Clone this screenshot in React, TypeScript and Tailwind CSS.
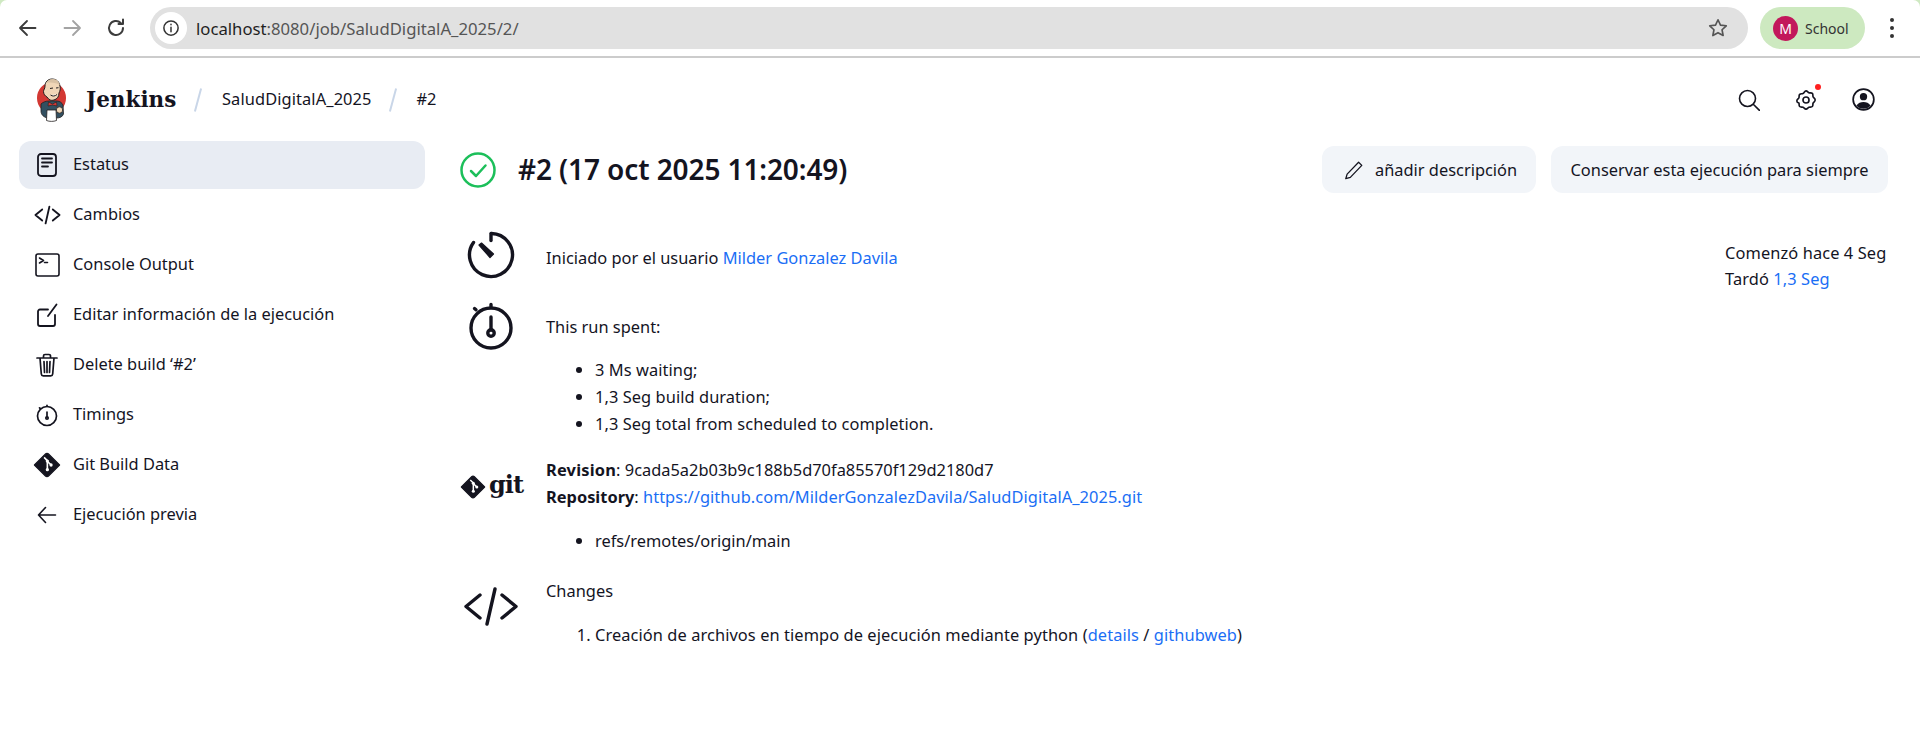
import React from "react";

const ink = "#14141f";

function S({ size = 24, w, h, vb = "0 0 24 24", children, className = "", sw = 2 }: { size?: number; w?: number; h?: number; vb?: string; children: React.ReactNode; className?: string; sw?: number }) {
  return (
    <svg width={w ?? size} height={h ?? size} viewBox={vb} fill="none" stroke="currentColor" strokeWidth={sw} strokeLinecap="round" strokeLinejoin="round" className={className}>
      {children}
    </svg>
  );
}

function JenkinsLogo() {
  return (
    <svg width="33" height="44" viewBox="0 0 33 44" className="shrink-0">
      <ellipse cx="16.500" cy="20" rx="14.500" ry="15.500" fill="#d33833" />
      <path d="M6 26c2-2 5-3 8-3h8c3 0 5 2 6 4l.5 9c-1 3-4 4-7 4H12c-3-1-6-3-6-7z" fill="#335061" stroke="#231f20" strokeWidth="0.8" />
      <path d="M10 8c0-4 3-7 7-7s7 2 8 7c.7 3 0 5-1 7 0 4-2 6-5 7-3 1-5 0-7-3-2-1-3.500-3-3.500-5.500 0-2 1.500-2.500 1.500-5.500z" fill="#f0d6b7" stroke="#231f20" strokeWidth="1" />
      <path d="M11 5c2-3 4-4 7-4 4 0 6 3 7 6-3-2-9-3-14-2z" fill="#d9c2a5" />
      <path d="M15 10.500l3-.5M21 10l2.500-.3" stroke="#231f20" strokeWidth="1" fill="none" />
      <path d="M15.500 17c2 1.500 4.500 1.300 6.500-.5" stroke="#231f20" strokeWidth="1" fill="#fff" />
      <path d="M13.500 24l4 2 4-2 .5 4-4.500-1-4.500 1z" fill="#d33833" stroke="#231f20" strokeWidth=".6" />
      <path d="M12 32h9l.5 10.500c-3 1.200-7 1.200-10 0z" fill="#fff" stroke="#231f20" strokeWidth="0.8" />
      <circle cx="24.500" cy="32" r="3.200" fill="#f0d6b7" stroke="#231f20" strokeWidth="0.8" />
    </svg>
  );
}

function GitDiamond({ size = 24 }: { size?: number }) {
  return (
    <svg width={size} height={size} viewBox="0 0 24 24" className="shrink-0">
      <path d="M1.200 12 10.700 2.500a1.800 1.800 0 0 1 2.600 0l9.500 9.500-9.500 9.500a1.800 1.800 0 0 1-2.600 0z" fill={ink} stroke={ink} strokeWidth="1" strokeLinejoin="round" />
      <path d="M9.500 5.500l2.800 2.800v8M12.300 8.800l3.200 3.200" stroke="#fff" strokeWidth="1.400" fill="none" />
      <circle cx="12.300" cy="8.600" r="1.400" fill="#fff" />
      <circle cx="12.300" cy="16" r="1.400" fill="#fff" />
      <circle cx="15.500" cy="12" r="1.400" fill="#fff" />
    </svg>
  );
}

const CodeIcon = ({ w = 26, h = 19, sw = 1.700 }: { w?: number; h?: number; sw?: number }) => (
  <S w={w} h={h} vb="0 0 56 41" sw={sw}>
    <path d="M17 9 3 20.500 17 32M39 9l14 11.500L39 32M32 3 24 38" />
  </S>
);

const sideItems: { label: string; icon: React.ReactNode; active?: boolean }[] = [
  {
    label: "Estatus",
    active: true,
    icon: (
      <S w={20} h={24} vb="0 0 20 24" sw={1.800}>
        <rect x="1" y="1" width="18" height="22" rx="3" />
        <path d="M5 5.500h10M5 9.500h10M5 13.500h6" />
      </S>
    ),
  },
  { label: "Cambios", icon: <div className="-mt-[1px]"><CodeIcon w={27} h={20} sw={3.800} /></div> },
  {
    label: "Console Output",
    icon: (
      <S w={25} h={24} vb="0 0 25 24" sw={1.600}>
        <rect x="1" y="1" width="23" height="22" rx="2" />
        <path d="M4.500 5 8.500 7.500 4.500 10M9.500 9.500h3" />
      </S>
    ),
  },
  {
    label: "Editar información de la ejecución",
    icon: (
      <S size={24} sw={1.800}>
        <path d="M13 6.500H5a2 2 0 0 0-2 2V21a2 2 0 0 0 2 2h13a2 2 0 0 0 2-2v-9" />
        <path d="M13 13 21.500 1.500" />
      </S>
    ),
  },
  {
    label: "Delete build ‘#2’",
    icon: (
      <S size={24} sw={1.700}>
        <path d="M2 5h20M5 5l1.300 16a2 2 0 0 0 2 1.800h7.400a2 2 0 0 0 2-1.800L19 5M8.500 5V3a1.500 1.500 0 0 1 1.500-1.500h4A1.500 1.500 0 0 1 15.500 3v2M9 8.500l.5 11M12 8.500v11M15 8.500l-.5 11" />
      </S>
    ),
  },
  {
    label: "Timings",
    icon: (
      <S size={24} sw={1.700}>
        <circle cx="12" cy="13" r="9.500" />
        <circle cx="12" cy="15" r="1.200" />
        <path d="M12 9v4.500M12 2.300v1M4.500 4.800l.8.700" />
      </S>
    ),
  },
  { label: "Git Build Data", icon: <GitDiamond size={28} /> },
  {
    label: "Ejecución previa",
    icon: (
      <S w={20} h={20} vb="0 0 20 20" sw={1.600}>
        <path d="M1.500 10h17M8.500 2.500 1.500 10l7 7.500" />
      </S>
    ),
  },
];

function Link({ children }: { children: React.ReactNode }) {
  return <span className="text-[#1a6ef5]">{children}</span>;
}

export default function App() {
  return (
    <div className="w-[1920px] h-[740px] overflow-hidden bg-[#cfe9c2] text-[#14141f] text-[16.400px] leading-[27px] font-['Noto_Sans',sans-serif]">
      <div className="h-[58px] bg-white rounded-t-[7px] border-b-2 border-[#cccccc] flex items-center text-[#1f1f1f]">
        <div className="w-[150px] flex items-center shrink-0 pl-[16px] gap-[20px]">
          <S size={24} sw={1.800} className="text-[#3c3c3c]"><path d="M4.500 12h15M11 5l-7 7 7 7" /></S>
          <S size={24} sw={1.800} className="text-[#a3a3a3]"><path d="M4.500 12h15M13 5l7 7-7 7" /></S>
          <S size={24} sw={2} className="text-[#3c3c3c]"><path d="M19 12a7 7 0 1 1-2.200-5.100M19 3.500v4.500h-4.500" /></S>
        </div>
        <div className="w-[1598px] h-[42px] rounded-full bg-[#e1e1e1] flex items-center pl-[5px] pr-[19px] shrink-0">
          <div className="w-[32px] h-[32px] rounded-full bg-white flex items-center justify-center shrink-0">
            <S size={18} sw={2} className="text-[#333]"><circle cx="12" cy="12" r="9.500" /><path d="M12 11v6M12 7v.5" /></S>
          </div>
          <div className="ml-[9px] text-[16.700px] text-[#555]"><span className="text-[#1f1f1f]">localhost</span>:8080/job/SaludDigitalA_2025/2/</div>
          <div className="ml-auto text-[#555]">
            <S size={22} sw={1.800}><path d="M12 3l2.700 5.800 6.300.8-4.600 4.300 1.200 6.300L12 17.100 6.400 20.200l1.200-6.300L3 9.600l6.300-.8z" /></S>
          </div>
        </div>
        <div className="ml-[12px] w-[105px] h-[42px] rounded-full bg-[#cde9c0] flex items-center pl-[13px] gap-[7px] shrink-0 text-[14px] text-[#333]">
          <div className="w-[25px] h-[25px] rounded-full bg-[#c2185b] text-white flex items-center justify-center text-[14px]">M</div>
          <span>School</span>
        </div>
        <div className="ml-[25px] flex flex-col gap-[4px]">
          <span className="w-[4px] h-[4px] rounded-full bg-[#333]" />
          <span className="w-[4px] h-[4px] rounded-full bg-[#333]" />
          <span className="w-[4px] h-[4px] rounded-full bg-[#333]" />
        </div>
      </div>

      <div className="h-[682px] bg-white">
        <header className="h-[83px] flex items-center pl-[35px] pr-[45px]">
          <JenkinsLogo />
          <span className="ml-[18px] w-[92px] font-['DejaVu_Serif',serif] font-bold text-[21.500px] leading-none whitespace-nowrap">Jenkins</span>
          <span className="ml-[19px] w-[2px] h-[24px] bg-[#c9d6e8] rotate-[15deg]" />
          <span className="ml-[23px] -mt-[2px] tracking-[0.1px]">SaludDigitalA_2025</span>
          <span className="ml-[20px] w-[2px] h-[24px] bg-[#c9d6e8] rotate-[15deg]" />
          <span className="ml-[23px] -mt-[2px]">#2</span>
          <div className="ml-auto flex items-center gap-[35px]">
            <S size={22} sw={1.600} vb="0 0 22 22"><circle cx="9.500" cy="9.500" r="8" /><path d="M15.500 15.500l6 6" /></S>
            <div className="relative">
              <S size={22} sw={1.800}>
                <path d="M12 2c1.500 0 2 1.500 3.200 2 1.200.5 2.600-.3 3.700.8 1.100 1.100.3 2.500.8 3.700.5 1.200 2.300 1.700 2.300 3.500s-1.800 2.200-2.300 3.400c-.5 1.200.3 2.600-.8 3.700-1.100 1.100-2.500.3-3.700.8-1.200.5-1.700 2.100-3.200 2.100s-2-1.600-3.200-2.100c-1.200-.5-2.600.3-3.700-.8-1.100-1.100-.3-2.500-.8-3.700C3.800 15.200 2 14.700 2 13s1.800-2.200 2.300-3.500c.5-1.200-.3-2.600.8-3.700 1.100-1.100 2.500-.3 3.700-.8C10 4.500 10.500 2 12 2z" />
                <circle cx="12" cy="12" r="3.300" />
              </S>
              <span className="absolute -top-[5px] -right-[4px] w-[6px] h-[6px] rounded-full bg-[#ff2020]" />
            </div>
            <svg width="23" height="23" viewBox="0 0 24 24">
              <circle cx="12" cy="12" r="10.800" fill="none" stroke={ink} strokeWidth="1.800" />
              <circle cx="12" cy="9" r="3.800" fill={ink} />
              <path d="M4.500 18.500c2-3 4.500-4 7.500-4s5.500 1 7.500 4a10.500 10.500 0 0 1-15 0z" fill={ink} />
            </svg>
          </div>
        </header>

        <div className="flex">
          <nav className="w-[406px] ml-[19px] shrink-0 flex flex-col gap-[2px]">
            {sideItems.map((it) => (
              <div key={it.label} className={`h-[48px] flex items-center rounded-[12px] ${it.active ? "bg-[#e8ecf3]" : ""}`}>
                <div className="w-[54px] pl-[2px] flex items-center justify-center shrink-0">{it.icon}</div>
                <span className="-mt-[3px]">{it.label}</span>
              </div>
            ))}
          </nav>

          <main className="ml-[35px] w-[1428px] shrink-0">
            <div className="flex items-center mt-[5px] h-[47px]">
              <svg width="36" height="36" viewBox="0 0 36 36" className="shrink-0">
                <circle cx="18" cy="18" r="16.500" fill="none" stroke="#1cbf5a" strokeWidth="2.500" />
                <path d="M11 19l5 5 9.500-10.500" fill="none" stroke="#1cbf5a" strokeWidth="2.500" strokeLinecap="round" strokeLinejoin="round" />
              </svg>
              <h1 className="ml-[22px] -mt-[2px] text-[28px] font-semibold leading-none tracking-[-0.1px]">#2 (17 oct 2025 11:20:49)</h1>
              <div className="ml-auto flex gap-[15px]">
                <button className="h-[47px] w-[214px] rounded-[12px] bg-[#f2f5f9] flex items-center pl-[21px] gap-[10px]">
                  <S size={22} sw={1.400}><path d="M17 3.500l3.500 3.500L8 20l-5 1.500L4.500 16.500z" /></S>
                  <span>añadir descripción</span>
                </button>
                <button className="h-[47px] w-[337px] rounded-[12px] bg-[#f2f5f9] flex items-center justify-center">
                  Conservar esta ejecución para siempre
                </button>
              </div>
            </div>

            <section className="mt-[37px] h-[49px] flex items-start">
              <div className="w-[86px] shrink-0 pl-[7px]">
                <svg width="48" height="49" viewBox="0 0 48 48" fill="none" stroke={ink} strokeWidth="3.400" strokeLinecap="round" className="block">
                  <path d="M24.500 3A21.500 21.500 0 1 1 6.500 12" />
                  <path d="M24 3v7" />
                  <path d="M12 14.500 14.500 12.500 26.500 23.500 23 27z" fill={ink} stroke={ink} strokeWidth="1.200" strokeLinejoin="round" />
                </svg>
              </div>
              <p className="pt-[14px]">Iniciado por el usuario <Link>Milder Gonzalez Davila</Link></p>
              <div className="ml-auto mt-[9px] w-[163px] tracking-[0.1px]">
                <div>Comenzó hace 4 Seg</div>
                <div className="-mt-[1px]">Tardó <Link>1,3 Seg</Link></div>
              </div>
            </section>

            <section className="mt-[23px] flex items-start">
              <div className="w-[86px] shrink-0 pl-[7px]">
                <svg width="48" height="48" viewBox="0 0 48 48" fill="none" stroke={ink} strokeWidth="3.400" strokeLinecap="round" className="block">
                  <circle cx="24" cy="26" r="20" />
                  <circle cx="24" cy="31" r="3.200" />
                  <path d="M24 15v13M24 2.500v2M7.500 6.500l1.500 1.300" />
                </svg>
              </div>
              <div className="pt-[11px]">
                <p>This run spent:</p>
                <ul className="mt-[16px] list-disc pl-[49px] tracking-[0.07px]">
                  <li>3 Ms waiting;</li>
                  <li>1,3 Seg build duration;</li>
                  <li>1,3 Seg total from scheduled to completion.</li>
                </ul>
              </div>
            </section>

            <section className="mt-[19px] flex items-start">
              <div className="w-[86px] shrink-0 flex items-center gap-[3px] h-[62px]">
                <GitDiamond size={26} />
                <span className="font-['DejaVu_Serif',serif] font-bold text-[24px] leading-none tracking-[-1px] -mt-[4px]">git</span>
              </div>
              <div>
                <p><b className="font-bold tracking-[0.2px]">Revision</b>: 9cada5a2b03b9c188b5d70fa85570f129d2180d7</p>
                <p><b className="font-bold">Repository</b>: <span className="tracking-[0.06px]"><Link>https://github.com/MilderGonzalezDavila/SaludDigitalA_2025.git</Link></span></p>
                <ul className="mt-[17px] list-disc pl-[49px]">
                  <li>refs/remotes/origin/main</li>
                </ul>
              </div>
            </section>

            <section className="mt-[23px] flex items-start">
              <div className="w-[86px] shrink-0 pl-[3px] pt-[9px]">
                <CodeIcon w={56} h={41} sw={3.400} />
              </div>
              <div>
                <p>Changes</p>
                <ol className="mt-[17px] list-decimal pl-[49px] tracking-[0.08px]">
                  <li>Creación de archivos en tiempo de ejecución mediante python (<Link>details</Link> / <Link>githubweb</Link>)</li>
                </ol>
              </div>
            </section>
          </main>
        </div>
      </div>
    </div>
  );
}
